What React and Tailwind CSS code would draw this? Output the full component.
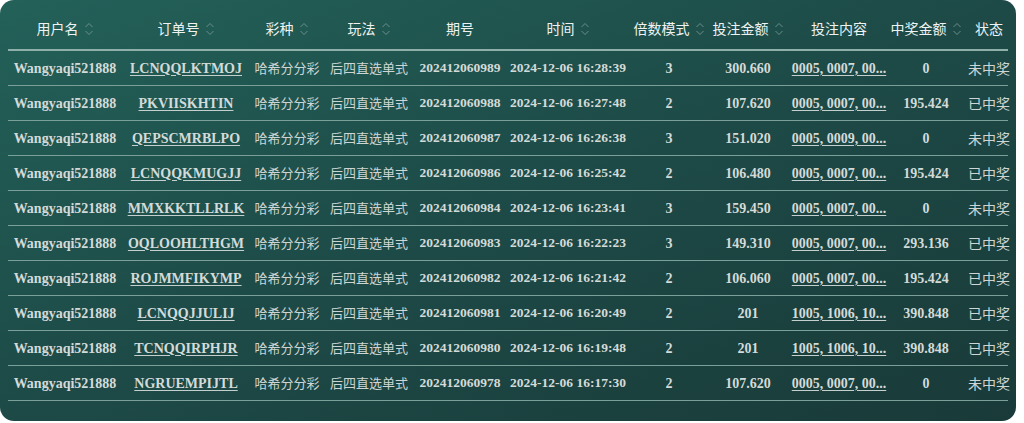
import React from "react";

const cols = "grid grid-cols-[114px_128px_74px_90px_92px_124px_78px_80px_102px_72px_54px]";

const headers = [
  { label: "用户名", sort: true },
  { label: "订单号", sort: true },
  { label: "彩种", sort: true },
  { label: "玩法", sort: true },
  { label: "期号" },
  { label: "时间", sort: true },
  { label: "倍数模式", sort: true },
  { label: "投注金额", sort: true },
  { label: "投注内容" },
  { label: "中奖金额", sort: true },
  { label: "状态" },
];

const rows = [
  ["LCNQQLKTMOJ", "202412060989", "16:28:39", "3", "300.660", "0005, 0007, 00...", "0", "未中奖"],
  ["PKVIISKHTIN", "202412060988", "16:27:48", "2", "107.620", "0005, 0007, 00...", "195.424", "已中奖"],
  ["QEPSCMRBLPO", "202412060987", "16:26:38", "3", "151.020", "0005, 0009, 00...", "0", "未中奖"],
  ["LCNQQKMUGJJ", "202412060986", "16:25:42", "2", "106.480", "0005, 0007, 00...", "195.424", "已中奖"],
  ["MMXKKTLLRLK", "202412060984", "16:23:41", "3", "159.450", "0005, 0007, 00...", "0", "未中奖"],
  ["OQLOOHLTHGM", "202412060983", "16:22:23", "3", "149.310", "0005, 0007, 00...", "293.136", "已中奖"],
  ["ROJMMFIKYMP", "202412060982", "16:21:42", "2", "106.060", "0005, 0007, 00...", "195.424", "已中奖"],
  ["LCNQQJJULIJ", "202412060981", "16:20:49", "2", "201", "1005, 1006, 10...", "390.848", "已中奖"],
  ["TCNQQIRPHJR", "202412060980", "16:19:48", "2", "201", "1005, 1006, 10...", "390.848", "已中奖"],
  ["NGRUEMPIJTL", "202412060978", "16:17:30", "2", "107.620", "0005, 0007, 00...", "0", "未中奖"],
];

const cjk = { fontFamily: '"Noto Sans CJK SC", sans-serif' };

function SortIcon() {
  return (
    <svg width="10" height="16" viewBox="0 0 10 16" className="ml-[5px]" fill="none" stroke="#6a8f8a" strokeWidth="1">
      <path d="M1.5 6 L5 2.5 L8.5 6" />
      <path d="M1.5 10 L5 13.5 L8.5 10" />
    </svg>
  );
}

function Cell({ children, className = "" }) {
  return (
    <div className={`flex items-center justify-center whitespace-nowrap ${className}`}>
      {children}
    </div>
  );
}

export default function App() {
  return (
    <div className="w-[1024px] h-[423px] bg-white">
      <div
        className="w-[1016px] h-[421px] rounded-[14px] px-[8px] pt-[8px] bg-gradient-to-br from-[#236159] via-[#1d4a47] to-[#193a38]"
        style={{ fontFamily: '"Liberation Serif", "Noto Sans CJK SC", serif' }}
      >
        <div className={`${cols} h-[43px] border-b-2 border-[#8fb0aa] text-[14px] text-[#eef3f2]`}>
          {headers.map((h) => (
            <Cell key={h.label}>
              <span style={cjk}>{h.label}</span>
              {h.sort && <SortIcon />}
            </Cell>
          ))}
        </div>
        {rows.map((r) => (
          <div
            key={r[0]}
            className={`${cols} h-[35px] border-b border-[#7b9f99] text-[14px] font-bold text-[#d3dbd9]`}
          >
            <Cell>Wangyaqi521888</Cell>
            <Cell>
              <span className="underline underline-offset-2 decoration-[#c5cfcd]">{r[0]}</span>
            </Cell>
            <Cell className="font-normal text-[13px] text-[#cdd6d4]">
              <span style={cjk}>哈希分分彩</span>
            </Cell>
            <Cell className="font-normal text-[13px] text-[#cdd6d4]">
              <span style={cjk}>后四直选单式</span>
            </Cell>
            <Cell className="text-[13.5px]">{r[1]}</Cell>
            <Cell className="text-[13.5px]">2024-12-06 {r[2]}</Cell>
            <Cell>{r[3]}</Cell>
            <Cell>{r[4]}</Cell>
            <Cell>
              <span className="underline underline-offset-2 decoration-[#c5cfcd]">{r[5]}</span>
            </Cell>
            <Cell>{r[6]}</Cell>
            <Cell className="font-normal text-[14px] text-[#cdd6d4]">
              <span style={cjk}>{r[7]}</span>
            </Cell>
          </div>
        ))}
      </div>
    </div>
  );
}
